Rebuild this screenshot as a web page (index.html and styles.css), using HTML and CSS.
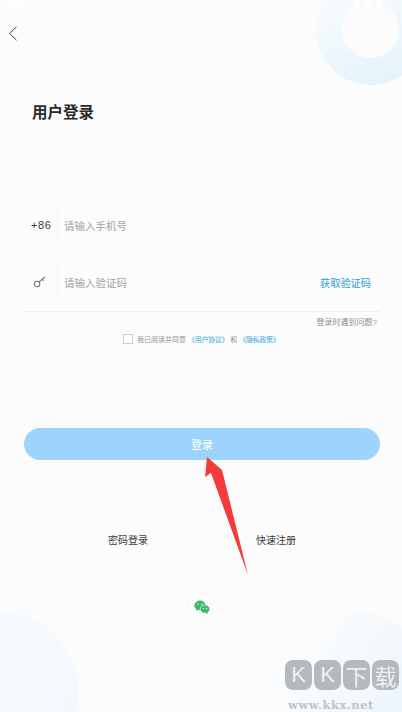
FILE: index.html
```html
<!DOCTYPE html>
<html lang="zh-CN">
<head>
<meta charset="utf-8">
<title>用户登录</title>
<link rel="stylesheet" href="styles.css">
</head>
<body>
<div class="page">
  <div class="ring"><div class="ring-hole"></div></div>
  <div class="blob blob-left"></div>
  <div class="blob blob-right"></div>
  <div class="status">
    <span class="status-time">9:56</span>
    <span class="status-icons"><i></i><i></i><i></i></span>
  </div>
  <header class="nav">
    <svg class="back" width="10" height="15" viewBox="0 0 10 15"><path d="M8.5 .8 1.5 7.5l7 6.7" fill="none" stroke="#444" stroke-width="1"/></svg>
  </header>
  <h1 class="title">用户登录</h1>
  <main class="form">
    <div class="row row-phone">
      <span class="prefix">+86</span>
      <span class="placeholder">请输入手机号</span>
    </div>
    <div class="row row-code">
      <span class="prefix">
        <svg class="key" width="14" height="12" viewBox="0 0 14 12"><circle cx="4" cy="8" r="2.8" fill="none" stroke="#777" stroke-width="1.1"/><path d="M6 6 12 .8M9.2 3.2l1.6 1.8" fill="none" stroke="#777" stroke-width="1.1"/></svg>
      </span>
      <span class="placeholder">请输入验证码</span>
      <span class="get-code">获取验证码</span>
    </div>
    <div class="help">登录时遇到问题?</div>
    <div class="agree">
      <span class="checkbox"></span>
      <span>我已阅读并同意</span>
      <span class="link">《用户协议》</span>
      <span>和</span>
      <span class="link">《隐私政策》</span>
    </div>
    <button class="submit">登录</button>
    <div class="alt">
      <span>密码登录</span>
      <span>快速注册</span>
    </div>
    <div class="social">
      <svg width="16" height="14" viewBox="0 0 16 14"><ellipse cx="6" cy="5.4" rx="5.6" ry="4.9" fill="#3cb96f"/><path d="M2.5 8.5 2 11l3-1.6z" fill="#3cb96f"/><ellipse cx="11" cy="9" rx="4.8" ry="4.1" fill="#3cb96f" stroke="#fcfcfd" stroke-width=".6"/><path d="M13.4 12l.6 2-2.4-1.2z" fill="#3cb96f"/><circle cx="4" cy="4" r=".7" fill="#fff"/><circle cx="8" cy="4" r=".7" fill="#fff"/><circle cx="9.5" cy="8.4" r=".6" fill="#fff"/><circle cx="12.6" cy="8.4" r=".6" fill="#fff"/></svg>
    </div>
  </main>
  <svg class="arrow" width="50" height="120" viewBox="0 0 50 120"><path d="M7 0 5 20 11 16 48 118 22 13 22 13Z" fill="#f53a3a"/></svg>
  <div class="mark">
    <div class="mark-logo"><b>K</b><b>K</b><b>下</b><b>载</b></div>
    <div class="mark-url">www.kkx.net</div>
  </div>
</div>
</body>
</html>
```
FILE: styles.css
```css
* { box-sizing: border-box; margin: 0; padding: 0; }
html, body { height: 100%; }
body {
  background: #fcfcfd;
  font-family: "Liberation Sans", "Noto Sans CJK SC", sans-serif;
  overflow: hidden;
}
.page { position: relative; width: 402px; height: 712px; overflow: hidden; background: #fcfcfd; }
.ring {
  position: absolute; left: 316px; top: -25px; width: 110px; height: 110px;
  border-radius: 50%;
  background: linear-gradient(160deg, #f8fbfd 20%, #e4f3fc 90%);
}
.ring-hole {
  position: absolute; left: 26px; top: 26px; width: 57px; height: 57px;
  border-radius: 50%; background: #fcfcfd;
}
.blob { position: absolute; border-radius: 50%; }
.blob-left {
  left: -80px; top: 612px; width: 158px; height: 158px;
  background: linear-gradient(120deg, #f9fcfe, #f1f8fe);
}
.blob-right {
  left: 268px; top: 612px; width: 170px; height: 170px;
  background: linear-gradient(120deg, #fbfcfd 20%, #e8f3fb 90%);
}
.status {
  position: relative; height: 8px; padding: 0 20px 0 6px;
  display: flex; justify-content: space-between;
  color: #fff; font-size: 9px; line-height: 8px;
}
.status-icons { display: flex; gap: 5px; }
.status-icons i { width: 6px; height: 6px; background: #fff; border-radius: 50%; }
.nav { position: relative; height: 42px; padding: 18px 0 0 8px; }
.back { display: block; }
.title {
  position: relative; margin: 53px 0 0 32px;
  font-size: 15.5px; line-height: 20px; font-weight: 700; color: #2a2a2a;
}
.form { position: relative; padding: 0 22px 0 24px; }
.row {
  display: flex; align-items: center; height: 36px;
  font-size: 10.5px; color: #a2a2a2;
}
.row-phone { margin-top: 84px; }
.row-code { margin-top: 21px; }
.prefix {
  width: 34px; height: 36px; padding-left: 7px; margin-right: 7px;
  display: flex; align-items: center;
  border-right: 1px solid #f2f2f3;
  font-size: 11px; letter-spacing: .6px; color: #3a3a3a;
}
.key { margin-left: 2px; }
.placeholder { margin-left: -1px; }
.get-code { margin-left: auto; margin-right: 9px; font-size: 10.2px; color: #2f9fd0; }
.help {
  margin-top: 11px; border-top: 1px solid #eeeeef;
  padding: 5px 3px 0 0;
  text-align: right; font-size: 8px; line-height: 11px; color: #909090;
}
.agree {
  display: flex; align-items: center; gap: 4px;
  margin-top: 5px; padding-left: 99px; height: 12px;
  font-size: 7px; color: #909090;
}
.checkbox {
  width: 10px; height: 10px;
  border: 1px solid #ccc; background: #fff;
}
.link { color: #3aa6d6; margin: 0 -2px; letter-spacing: -.3px; }
.submit {
  display: block; width: 356px; height: 32px; margin-top: 83px;
  border: 0; border-radius: 16px; background: #9cd4fb;
  color: #fff; font: 11px "Liberation Sans", "Noto Sans CJK SC", sans-serif;
}
.alt {
  display: flex; gap: 108px; margin-top: 74px; padding-left: 84px;
  font-size: 10px; line-height: 14px; color: #3a3a3a;
}
.social {
  width: 27px; height: 27px; margin: 45px 0 0 164px;
  display: flex; align-items: center; justify-content: center;
  border: 1px solid #f3f6f5; border-radius: 50%;
}
.arrow { position: absolute; left: 200px; top: 457px; }
.mark { position: absolute; left: 285px; top: 660px; width: 117px; }
.mark-logo { display: flex; gap: 2px; }
.mark-logo b {
  width: 27px; height: 30px; border-radius: 8px;
  display: flex; align-items: center; justify-content: center;
  background: #b4b9bf; color: #eef1f3; font-size: 22px; font-weight: 400;
}
.mark-url {
  margin-top: 8px; padding-left: 3px;
  font: 700 11.5px/14px "DejaVu Serif", serif; letter-spacing: .5px; color: #bcc3c9;
}
```
